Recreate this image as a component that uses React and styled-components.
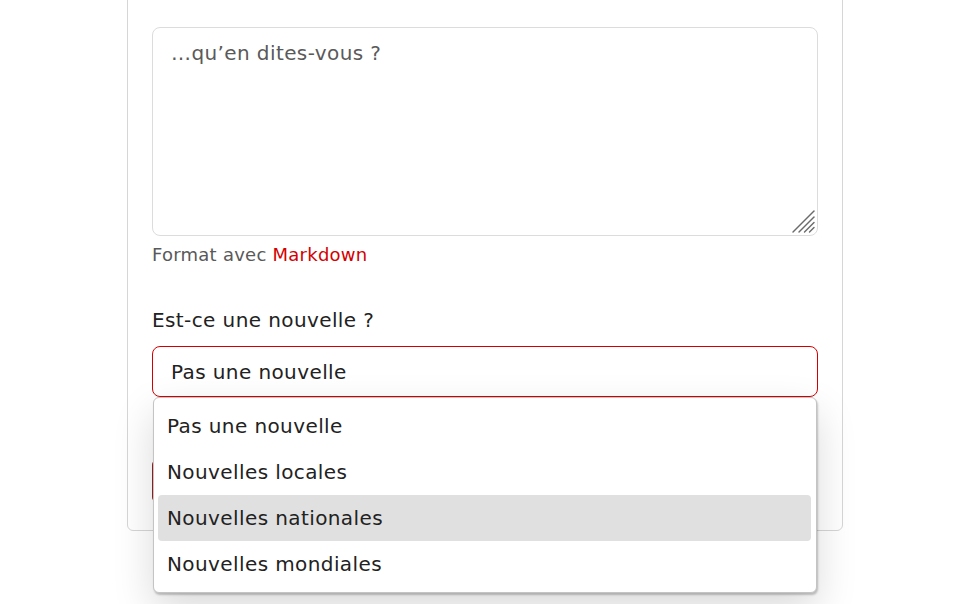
import React from "react";
import styled, { createGlobalStyle } from "styled-components";

const Global = createGlobalStyle`
  html, body { margin: 0; padding: 0; background: #fff; }
  body { min-height: 604px; font-family: "DejaVu Sans", "Noto Sans", sans-serif; color: #222; }
  * { box-sizing: border-box; }
`;

const Card = styled.div`
  width: 716px;
  margin: -40px 0 0 calc(50% - 357px);
  padding: 66px 24px 27px;
  border: 1px solid #d6d6d6;
  border-radius: 6px;
  background: #fff;
`;

const AreaWrap = styled.div`
  position: relative;
`;

const TextArea = styled.textarea`
  display: block;
  width: 100%;
  height: 209px;
  margin: 0;
  padding: 10px 18px;
  border: 1px solid #dcdcdc;
  border-radius: 8px;
  font-family: inherit;
  font-size: 20px;
  letter-spacing: 0.4px;
  line-height: 30px;
  color: #222;
  resize: none;
  outline: none;
  &::placeholder { color: #5a5a5a; opacity: 1; }
`;

const Grip = styled.svg`
  position: absolute;
  right: 2px;
  bottom: 2px;
  width: 24px;
  height: 24px;
  pointer-events: none;
`;

const Help = styled.div`
  margin-top: 5px;
  font-size: 18px;
  letter-spacing: 0.25px;
  line-height: 27px;
  color: #595959;
`;

const HelpLink = styled.a`
  color: #d40000;
  text-decoration: none;
`;

const Label = styled.label`
  display: block;
  margin-top: 37px;
  margin-bottom: 11px;
  font-size: 20px;
  letter-spacing: 0.4px;
  line-height: 30px;
  color: #222;
`;

const SelectWrap = styled.div`
  position: relative;
`;

const SelectBox = styled.div`
  height: 51px;
  padding: 10px 18px 9px;
  border: 1px solid #d40000;
  border-radius: 8px;
  font-size: 20px;
  letter-spacing: 0.4px;
  line-height: 30px;
  color: #222;
  background: #fff;
`;

const Listbox = styled.ul`
  position: absolute;
  top: 100%;
  left: 1px;
  right: 1px;
  z-index: 5;
  margin: 0;
  padding: 5px 5px 5px 4px;
  list-style: none;
  background: #fff;
  border: 1px solid #c4c4c4;
  border-radius: 6px;
  box-shadow: 1px 2px 2px rgba(0, 0, 0, 0.22), 0 16px 40px rgba(0, 0, 0, 0.15);
`;

const Option = styled.li`
  height: 46px;
  padding: 0 9px;
  border-radius: 4px;
  font-size: 20px;
  letter-spacing: 0.4px;
  line-height: 46px;
  color: #222;
  background: ${(p) => (p.$active ? "#e0e0e0" : "transparent")};
`;

const Submit = styled.button`
  display: block;
  width: 160px;
  margin-top: 62px;
  height: 44px;
  border: 1px solid #9e1f1f;
  border-radius: 6px;
  background: #c00000;
`;

const options = [
  "Pas une nouvelle",
  "Nouvelles locales",
  "Nouvelles nationales",
  "Nouvelles mondiales",
];

export default function App() {
  return (
    <>
      <Global />
      <Card>
        <AreaWrap>
          <TextArea placeholder="…qu’en dites-vous ?" />
          <Grip viewBox="0 0 24 24">
            <g stroke="#6b6b6b" strokeWidth="1.4" strokeLinecap="round">
              <line x1="1" y1="22" x2="22" y2="1" />
              <line x1="7" y1="22" x2="22" y2="7" />
              <line x1="12.5" y1="22" x2="22" y2="12.5" />
              <line x1="17.5" y1="22" x2="22" y2="17.5" />
            </g>
          </Grip>
        </AreaWrap>
        <Help>
          Format avec <HelpLink href="#">Markdown</HelpLink>
        </Help>
        <Label>Est-ce une nouvelle ?</Label>
        <SelectWrap>
          <SelectBox>Pas une nouvelle</SelectBox>
          <Listbox>
            {options.map((o, i) => (
              <Option key={o} $active={i === 2}>
                {o}
              </Option>
            ))}
          </Listbox>
        </SelectWrap>
        <Submit aria-label="Publier" />
      </Card>
    </>
  );
}
